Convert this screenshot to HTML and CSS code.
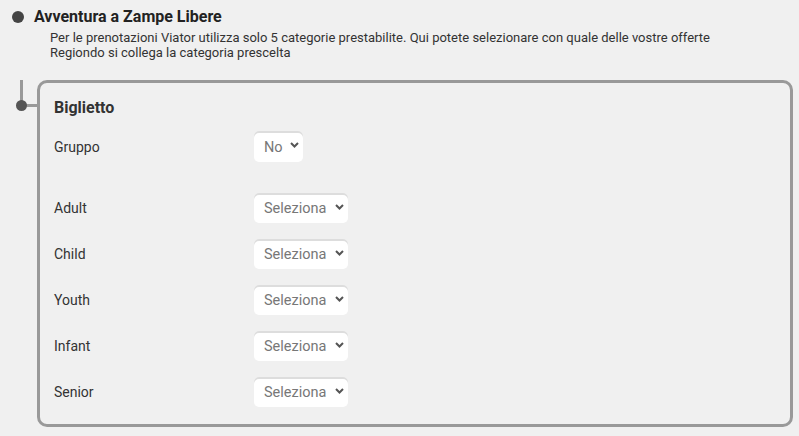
FILE: index.html
```html
<!DOCTYPE html>
<html lang="it">
<head>
    <meta charset="UTF-8">
    <meta name="viewport" content="width=device-width, initial-scale=1.0">
    <title>Categorie Viator</title>
    <link rel="stylesheet" href="styles.css">
</head>
<body>
    <div class="offer">
        <div class="offer-head">
            <span class="offer-dot"></span>
            <h1>Avventura a Zampe Libere</h1>
        </div>
        <p class="offer-desc">Per le prenotazioni Viator utilizza solo 5 categorie prestabilite. Qui potete selezionare con quale delle vostre offerte<br>Regiondo si collega la categoria prescelta</p>

        <div class="ticket-box">
            <span class="connector"></span>
            <h2>Biglietto</h2>

            <div class="field field-group">
                <label for="gruppo">Gruppo</label>
                <div class="select-wrap">
                    <select id="gruppo" class="small">
                        <option>No</option>
                        <option>Sì</option>
                    </select>
                    <svg class="chevron" width="9" height="6" viewBox="0 0 9 6"><path d="M1 1l3.5 3.5L8 1" fill="none" stroke="#555" stroke-width="2"/></svg>
                </div>
            </div>

            <div class="field">
                <label for="adult">Adult</label>
                <div class="select-wrap">
                    <select id="adult"><option>Seleziona</option></select>
                    <svg class="chevron" width="9" height="6" viewBox="0 0 9 6"><path d="M1 1l3.5 3.5L8 1" fill="none" stroke="#555" stroke-width="2"/></svg>
                </div>
            </div>
            <div class="field">
                <label for="child">Child</label>
                <div class="select-wrap">
                    <select id="child"><option>Seleziona</option></select>
                    <svg class="chevron" width="9" height="6" viewBox="0 0 9 6"><path d="M1 1l3.5 3.5L8 1" fill="none" stroke="#555" stroke-width="2"/></svg>
                </div>
            </div>
            <div class="field">
                <label for="youth">Youth</label>
                <div class="select-wrap">
                    <select id="youth"><option>Seleziona</option></select>
                    <svg class="chevron" width="9" height="6" viewBox="0 0 9 6"><path d="M1 1l3.5 3.5L8 1" fill="none" stroke="#555" stroke-width="2"/></svg>
                </div>
            </div>
            <div class="field">
                <label for="infant">Infant</label>
                <div class="select-wrap">
                    <select id="infant"><option>Seleziona</option></select>
                    <svg class="chevron" width="9" height="6" viewBox="0 0 9 6"><path d="M1 1l3.5 3.5L8 1" fill="none" stroke="#555" stroke-width="2"/></svg>
                </div>
            </div>
            <div class="field">
                <label for="senior">Senior</label>
                <div class="select-wrap">
                    <select id="senior"><option>Seleziona</option></select>
                    <svg class="chevron" width="9" height="6" viewBox="0 0 9 6"><path d="M1 1l3.5 3.5L8 1" fill="none" stroke="#555" stroke-width="2"/></svg>
                </div>
            </div>
        </div>
    </div>
</body>
</html>
```

FILE: styles.css
```css
body {
    font-family: Roboto, "Liberation Sans", Arial, sans-serif;
    margin: 0;
    background-color: #f0f0f0;
    color: #333;
}
.offer {
    padding: 9px 0 0 0;
}
.offer-head {
    display: flex;
    align-items: center;
    height: 16px;
}
.offer-dot {
    width: 12px;
    height: 12px;
    border-radius: 50%;
    background-color: #444;
    margin-left: 12px;
    margin-right: 10px;
}
.offer-head h1 {
    margin: 0;
    font-size: 16px;
    font-weight: bold;
    color: #222;
    line-height: 16px;
}
.offer-desc {
    margin: 5px 0 0 50px;
    font-size: 13px;
    line-height: 15px;
    color: #333;
}
.ticket-box {
    position: relative;
    margin: 20px 6px 0 37px;
    border: 3px solid #999;
    border-radius: 10px;
    padding: 16px 14px 17px 14px;
}
/* connettore a sinistra del riquadro */
.connector {
    position: absolute;
    left: -20px;
    top: -3px;
    width: 3px;
    height: 27px;
    background-color: #999;
}
.connector::before {
    content: "";
    position: absolute;
    left: 1px;
    top: 24px;
    width: 18px;
    height: 3px;
    background-color: #999;
}
.connector::after {
    content: "";
    position: absolute;
    left: -4px;
    top: 20px;
    width: 11px;
    height: 11px;
    border-radius: 50%;
    background-color: #555;
}
.ticket-box h2 {
    margin: 0 0 14px 0;
    font-size: 16px;
    line-height: 18px;
    font-weight: bold;
    color: #333;
}
.field {
    display: flex;
    align-items: center;
    height: 30px;
    margin-bottom: 16px;
}
.field:last-child {
    margin-bottom: 0;
}
.field-group {
    height: 31px;
    margin-bottom: 31px;
}
.field label {
    width: 200px;
    font-size: 14px;
    color: #333;
}
.select-wrap {
    position: relative;
}
.select-wrap select {
    appearance: none;
    -webkit-appearance: none;
    border: none;
    border-radius: 5px;
    background-color: white;
    box-shadow: inset 0 2px 0 #ddd;
    font-family: inherit;
    font-size: 14.5px;
    color: #777;
    height: 30px;
    width: 94px;
    padding: 1px 0 0 10px;
}
.select-wrap select.small {
    width: 49px;
    height: 31px;
}
.chevron {
    position: absolute;
    right: 4px;
    top: 11px;
    pointer-events: none;
}
```
